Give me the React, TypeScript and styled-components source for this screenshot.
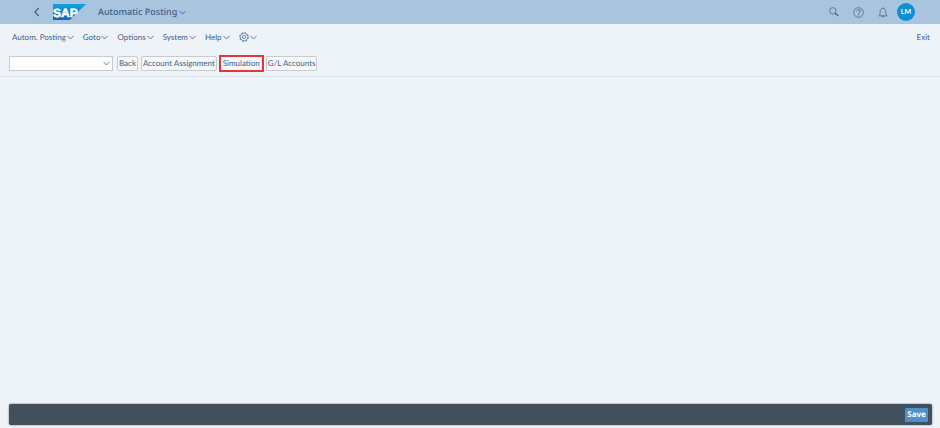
import React from "react";
import styled, { createGlobalStyle } from "styled-components";

const GlobalStyle = createGlobalStyle`
  *, *::before, *::after { box-sizing: border-box; }
  body { margin: 0; background: #eef3f8; }
  button, input { font: inherit; color: inherit; text-rendering: inherit; }
`;

const Page = styled.div`
  display: flex;
  flex-direction: column;
  min-height: 100vh;
  background: #eef3f8;
  color: #3f6186;
  font: 8px/12px Lato, "Open Sans", sans-serif;
  text-rendering: geometricPrecision;
`;

const ShellBar = styled.header`
  display: flex;
  align-items: center;
  height: 24px;
  padding: 0 25px 0 33px;
  background: #a9c4df;
  color: #3d5f84;
`;

const PlainButton = styled.button`
  display: inline-flex;
  align-items: center;
  padding: 0;
  border: 0;
  background: transparent;
  cursor: pointer;
  white-space: nowrap;
`;

const LogoLink = styled.a`
  display: flex;
  margin-left: 12px;
`;

const Title = styled.h1`
  margin: 0 0 0 12px;
  font-family: "Noto Sans", sans-serif;
  font-size: 9px;
  line-height: 12px;
  font-weight: 500;
`;

const TitleButton = styled(PlainButton)`
  gap: 2px;
`;

const ShellActions = styled.div`
  display: flex;
  align-items: center;
  gap: 14px;
  margin-left: auto;
`;

const Avatar = styled(PlainButton)`
  justify-content: center;
  width: 18px;
  height: 18px;
  margin-left: -5px;
  border-radius: 50%;
  background: #0a90d3;
  color: #fff;
  font-size: 7px;
  font-weight: 700;
`;

const MenuBar = styled.nav`
  display: flex;
  align-items: center;
  gap: 9px;
  height: 26px;
  padding: 0 10px 0 12px;
`;

const MenuButton = styled(PlainButton)`
  gap: 1px;
`;

const ExitButton = styled(PlainButton)`
  margin-left: auto;
`;

const Toolbar = styled.div`
  display: flex;
  align-items: center;
  gap: 3px;
  height: 27px;
  padding: 0 9px;
  border-bottom: 1px solid #dce5ef;
`;

const CommandField = styled.label`
  display: flex;
  align-items: center;
  width: 104px;
  height: 15px;
  margin-right: 1px;
  padding-right: 2px;
  border: 1px solid #c6ccd2;
  background: #fff;
`;

const CommandInput = styled.input`
  flex: 1;
  min-width: 0;
  padding: 0 3px;
  border: 0;
  outline: 0;
  background: transparent;
`;

const ToolButton = styled(PlainButton)<{ $marked?: boolean }>`
  height: 15px;
  padding: 0 ${(p) => (p.$marked ? "2px" : "1px")};
  border: 1px solid #c9cccf;
  border-radius: ${(p) => (p.$marked ? "0" : "2px")};
  background: #f6f7f8;
  outline: ${(p) => (p.$marked ? "2px solid #e5343a" : "none")};
  outline-offset: -1px;
`;

const Content = styled.main`
  flex: 1;
`;

const Footer = styled.footer`
  display: flex;
  align-items: center;
  justify-content: flex-end;
  height: 21px;
  margin: 0 8px 3px 9px;
  padding: 0 4px;
  border-radius: 2px;
  background: #424f5c;
  box-shadow: 0 0 2px #5f6b78;
`;

const SaveButton = styled(PlainButton)`
  justify-content: center;
  width: 23px;
  height: 14px;
  border-radius: 1px;
  background: #4d90cb;
  color: #fff;
  font-family: "Noto Sans", sans-serif;
  font-weight: 700;
`;

const Chevron = () => (
  <svg width="7" height="5" viewBox="0 0 7 5" fill="none" stroke="currentColor" strokeWidth=".8" aria-hidden="true">
    <path d="M.4.8 3.5 4 6.6.8" />
  </svg>
);

const SapLogo = () => (
  <svg width="33" height="16" viewBox="0 0 33 16" role="img" aria-label="SAP">
    <defs>
      <linearGradient id="sapBlue" x1="0" y1="0" x2="0" y2="1">
        <stop offset="0" stopColor="#10a4df" />
        <stop offset="1" stopColor="#1763b2" />
      </linearGradient>
    </defs>
    <path d="M0 0h33L17 16H0z" fill="url(#sapBlue)" />
    <text x="0" y="13" fill="#fff" stroke="#fff" strokeWidth=".5" fontFamily="Liberation Sans, Arial, sans-serif" fontWeight="700" fontSize="12">
      SAP
    </text>
  </svg>
);

const BackIcon = () => (
  <svg width="8" height="10" viewBox="0 0 8 10" fill="none" stroke="currentColor" strokeWidth="1.1" aria-hidden="true">
    <path d="M5.8 1 1.8 5l4 4" />
  </svg>
);

const SearchIcon = () => (
  <svg width="10" height="10" viewBox="0 0 10 10" fill="none" stroke="currentColor" aria-hidden="true">
    <circle cx="3.8" cy="3.8" r="3.2" strokeWidth=".7" />
    <path d="m6.2 6.2 3.2 2.9" strokeWidth="1.2" />
  </svg>
);

const HelpIcon = () => (
  <svg width="11" height="11" viewBox="0 0 11 11" fill="none" stroke="currentColor" strokeWidth=".7" aria-hidden="true">
    <circle cx="5.5" cy="5.5" r="4.8" />
    <path d="M3.9 4.2c0-2 3.3-2 3.3 0 0 1.3-1.6 1.2-1.6 2.5M5.6 7.6v.9" strokeWidth=".9" />
  </svg>
);

const BellIcon = () => (
  <svg width="10" height="11" viewBox="0 0 10 11" fill="none" stroke="currentColor" strokeWidth=".7" aria-hidden="true">
    <path d="M.8 8.8c1.4-1 1.3-2 1.3-4C2.1 2.7 3.2 1.4 5 1.4s2.9 1.3 2.9 3.4c0 2-.1 3 1.3 4zM5 .4v1M3.8 9c.1 1.6 2.3 1.6 2.4 0" />
  </svg>
);

const GearIcon = () => (
  <svg width="10" height="10" viewBox="0 0 10 10" fill="none" stroke="currentColor" aria-hidden="true">
    <circle cx="5" cy="5" r="3.8" strokeWidth=".6" />
    <circle cx="5" cy="5" r="4.4" strokeWidth=".8" strokeDasharray="1.728 1.728" />
    <circle cx="5" cy="5" r="1.6" strokeWidth=".7" />
  </svg>
);

const menus = ["Autom. Posting", "Goto", "Options", "System", "Help"];
const tools = ["Back", "Account Assignment", "Simulation", "G/L Accounts"];

export default function App() {
  return (
    <Page>
      <GlobalStyle />
      <ShellBar>
        <PlainButton aria-label="Navigate back"><BackIcon /></PlainButton>
        <LogoLink href="#"><SapLogo /></LogoLink>
        <Title>
          <TitleButton>Automatic Posting<Chevron /></TitleButton>
        </Title>
        <ShellActions>
          <PlainButton aria-label="Search"><SearchIcon /></PlainButton>
          <PlainButton aria-label="Help"><HelpIcon /></PlainButton>
          <PlainButton aria-label="Notifications"><BellIcon /></PlainButton>
          <Avatar>LM</Avatar>
        </ShellActions>
      </ShellBar>
      <MenuBar>
        {menus.map((m) => (
          <MenuButton key={m}>{m}<Chevron /></MenuButton>
        ))}
        <MenuButton aria-label="Settings"><GearIcon /><Chevron /></MenuButton>
        <ExitButton>Exit</ExitButton>
      </MenuBar>
      <Toolbar>
        <CommandField>
          <CommandInput aria-label="Command" />
          <PlainButton aria-label="Show commands"><Chevron /></PlainButton>
        </CommandField>
        {tools.map((t) => (
          <ToolButton key={t} $marked={t === "Simulation"}>{t}</ToolButton>
        ))}
      </Toolbar>
      <Content />
      <Footer>
        <SaveButton>Save</SaveButton>
      </Footer>
    </Page>
  );
}
